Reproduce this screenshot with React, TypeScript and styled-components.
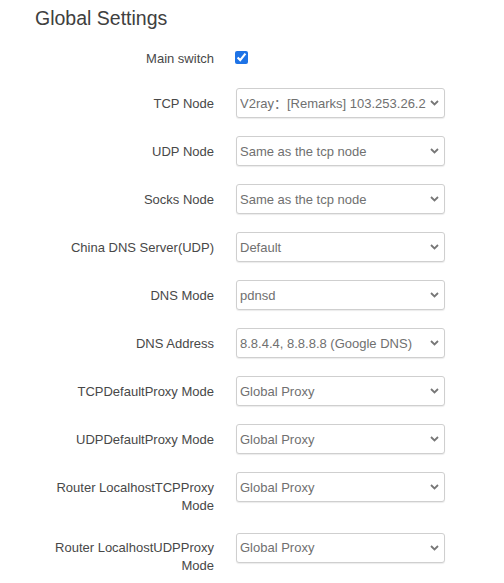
import { createGlobalStyle } from 'styled-components'
import styled from 'styled-components'

const GlobalStyle = createGlobalStyle`
  body {
    margin: 0;
    background: #fff;
    font-family: "Liberation Sans", Arial, "Noto Sans CJK SC", sans-serif;
  }
`

const Page = styled.div`
  padding-left: 34px;
`

const Title = styled.h2`
  margin: 0 0 5px;
  padding: 7px 0 0 1px;
  font-size: 19.5px;
  line-height: 22px;
  font-weight: normal;
  color: #404040;
`

const Row = styled.div`
  display: flex;
  align-items: flex-start;
  padding: 9px 0;
`

const Label = styled.label`
  width: 180px;
  flex: none;
  margin-right: 22px;
  padding-top: 6.5px;
  font-size: 13px;
  line-height: 18px;
  text-align: right;
  color: #484848;
`

const CheckCell = styled.div`
  height: 27px;
  padding-top: 8px;
  box-sizing: border-box;
`

const Check = styled.input`
  display: block;
  width: 13px;
  height: 13px;
  margin: 0 0 0 -1px;
  accent-color: #1e73e6;
`

const SelectWrap = styled.div`
  position: relative;
  width: 209px;
  height: 30px;
`

const Select = styled.select`
  appearance: none;
  display: block;
  width: 100%;
  height: 100%;
  margin: 0;
  padding: 0 16px 0 3px;
  border: 1px solid #cfcfcf;
  border-radius: 3px;
  box-shadow: 0 1px 1px rgba(0, 0, 0, 0.08);
  background: #fff;
  font-family: "Liberation Sans", Arial, "Noto Sans CJK SC", sans-serif;
  font-size: 13px;
  color: #707070;
  outline: none;
`

const Chevron = styled.svg`
  position: absolute;
  right: 6px;
  top: 50%;
  margin-top: -3px;
  pointer-events: none;
`

type Field = { label: string; value: string }

const fields: Field[] = [
  { label: 'TCP Node', value: 'V2ray：[Remarks] 103.253.26.2' },
  { label: 'UDP Node', value: 'Same as the tcp node' },
  { label: 'Socks Node', value: 'Same as the tcp node' },
  { label: 'China DNS Server(UDP)', value: 'Default' },
  { label: 'DNS Mode', value: 'pdnsd' },
  { label: 'DNS Address', value: '8.8.4.4, 8.8.8.8 (Google DNS)' },
  { label: 'TCPDefaultProxy Mode', value: 'Global Proxy' },
  { label: 'UDPDefaultProxy Mode', value: 'Global Proxy' },
  { label: 'Router LocalhostTCPProxy Mode', value: 'Global Proxy' },
  { label: 'Router LocalhostUDPProxy Mode', value: 'Global Proxy' },
]

function Dropdown({ value }: { value: string }) {
  return (
    <SelectWrap>
      <Select defaultValue={value}>
        <option value={value}>{value}</option>
      </Select>
      <Chevron width="9" height="6" viewBox="0 0 9 6">
        <polyline points="1,1 4.5,4.5 8,1" fill="none" stroke="#777" strokeWidth="1.8" />
      </Chevron>
    </SelectWrap>
  )
}

export default function App() {
  return (
    <>
      <GlobalStyle />
      <Page>
        <Title>Global Settings</Title>
        <Row>
          <Label>Main switch</Label>
          <CheckCell>
            <Check type="checkbox" defaultChecked />
          </CheckCell>
        </Row>
        {fields.map((f) => (
          <Row key={f.label}>
            <Label>{f.label}</Label>
            <Dropdown value={f.value} />
          </Row>
        ))}
      </Page>
    </>
  )
}
